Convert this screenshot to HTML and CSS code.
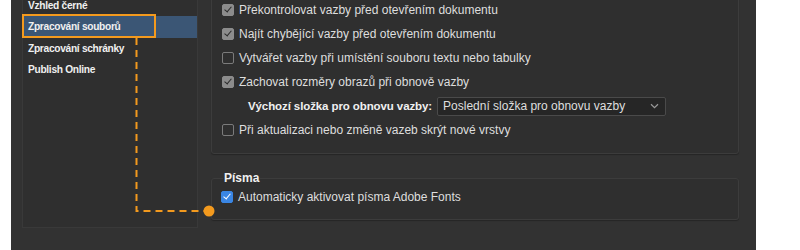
FILE: index.html
```html
<!DOCTYPE html>
<html lang="cs">
  <head>
    <meta charset="UTF-8">
    <title>Předvolby – Zpracování souborů</title>
    <link rel="stylesheet" href="styles.css">
  </head>
  <body>
    <div class="window">
      <ul class="sidebar">
        <li>Vzhled černé</li>
        <li class="selected">Zpracování souborů</li>
        <li>Zpracování schránky</li>
        <li>Publish Online</li>
      </ul>

      <div class="content">
        <div class="panel links">
          <label class="row"><span class="check on"></span>Překontrolovat vazby před otevřením dokumentu</label>
          <label class="row"><span class="check on"></span>Najít chybějící vazby před otevřením dokumentu</label>
          <label class="row"><span class="check"></span>Vytvářet vazby při umístění souboru textu nebo tabulky</label>
          <label class="row"><span class="check on"></span>Zachovat rozměry obrazů při obnově vazby</label>
          <div class="row select-row">
            <span class="select-label">Výchozí složka pro obnovu vazby:</span>
            <div class="select">
              <span>Poslední složka pro obnovu vazby</span>
              <svg width="9" height="6" viewBox="0 0 9 6"><path d="M1 1.2 L4.5 4.6 L8 1.2" fill="none" stroke="#9a9a9a" stroke-width="1.2"/></svg>
            </div>
          </div>
          <label class="row"><span class="check"></span>Při aktualizaci nebo změně vazeb skrýt nové vrstvy</label>
        </div>

        <fieldset class="panel fonts">
          <legend>Písma</legend>
          <label class="row"><span class="check blue"></span>Automaticky aktivovat písma Adobe Fonts</label>
        </fieldset>
      </div>

      <!-- callout: selected item -> fonts option -->
      <div class="callout-box"></div>
      <svg class="callout-line" width="90" height="185" viewBox="0 0 90 185">
        <path d="M1.5 0 V173 H70" fill="none" stroke="#f39a1e" stroke-width="2" stroke-dasharray="7 5"/>
        <circle cx="74" cy="173" r="5.5" fill="#f39a1e"/>
      </svg>
    </div>
  </body>
</html>
```

FILE: styles.css
```css
body {
  margin: 0;
  background-color: #fff;
  font-family: 'Liberation Sans', Arial, sans-serif;
  font-size: 12px;
  color: #dedede;
}

.window {
  position: relative;
  margin-left: 11px;
  width: 745px;
  height: 250px;
  background-color: #323232;
  display: flex;
  overflow: hidden;
}

/* left list */
.sidebar {
  list-style: none;
  margin: -6px 0 0 11px;
  padding: 0;
  width: 174px;
  height: 232px;
  background-color: #2f2f2f;
  border: 1px solid #393939;
}

.sidebar li {
  height: 21px;
  line-height: 21px;
  padding-left: 5px;
  font-size: 10.2px;
  letter-spacing: -0.3px;
  font-weight: bold;
  color: #f0f0f0;
}

.sidebar li.selected {
  background-color: #3b5675;
  height: 22px;
  line-height: 22px;
}

/* right side */
.content {
  margin-left: 13px;
  width: 528px;
  display: flex;
  flex-direction: column;
}

.panel {
  border: 1px solid #3c3c3c;
  border-radius: 3px;
  background-color: #2f2f2f;
  box-shadow: 0 1px 1px rgba(0, 0, 0, 0.25);
}

.links {
  margin-top: -10px;
  padding: 7px 10px 11px 10px;
}

.row {
  height: 24px;
  display: flex;
  align-items: center;
}

.check {
  width: 10px;
  height: 10px;
  margin-right: 5px;
  border: 1px solid #7b7b7b;
  border-radius: 2px;
  position: relative;
  flex-shrink: 0;
}

.check.on {
  background-color: #8c8c8c;
  border-color: #8c8c8c;
}

.check.blue {
  background-color: #3a86e4;
  border-color: #3a86e4;
}

.check.on::after,
.check.blue::after {
  content: "";
  position: absolute;
  left: 3px;
  top: 0px;
  width: 3px;
  height: 6px;
  border: solid #2a2a2a;
  border-width: 0 1.5px 1.5px 0;
  transform: rotate(40deg);
}

.check.blue::after {
  border-color: #fff;
}

.select-row {
  padding-left: 26px;
}

.select-label {
  font-weight: bold;
  font-size: 11.5px;
  letter-spacing: -0.1px;
  color: #f0f0f0;
  margin-right: 5px;
}

.select {
  width: 216px;
  height: 17px;
  padding: 0 6px 0 5px;
  background-color: #262626;
  border: 1px solid #4a4a4a;
  border-radius: 2px;
  display: flex;
  align-items: center;
  justify-content: space-between;
}

.fonts {
  margin: 17px 0 0 0;
  padding: 0 10px 10px 9px;
  min-width: 0;
}

.fonts legend {
  padding: 0 1px;
  margin-left: 2px;
  font-weight: bold;
  color: #f0f0f0;
}

/* orange callout annotation */
.callout-box {
  position: absolute;
  left: 11px;
  top: 14px;
  width: 130px;
  height: 20px;
  border: 2.5px solid #f39a1e;
}

.callout-line {
  position: absolute;
  left: 124px;
  top: 38px;
}
```
